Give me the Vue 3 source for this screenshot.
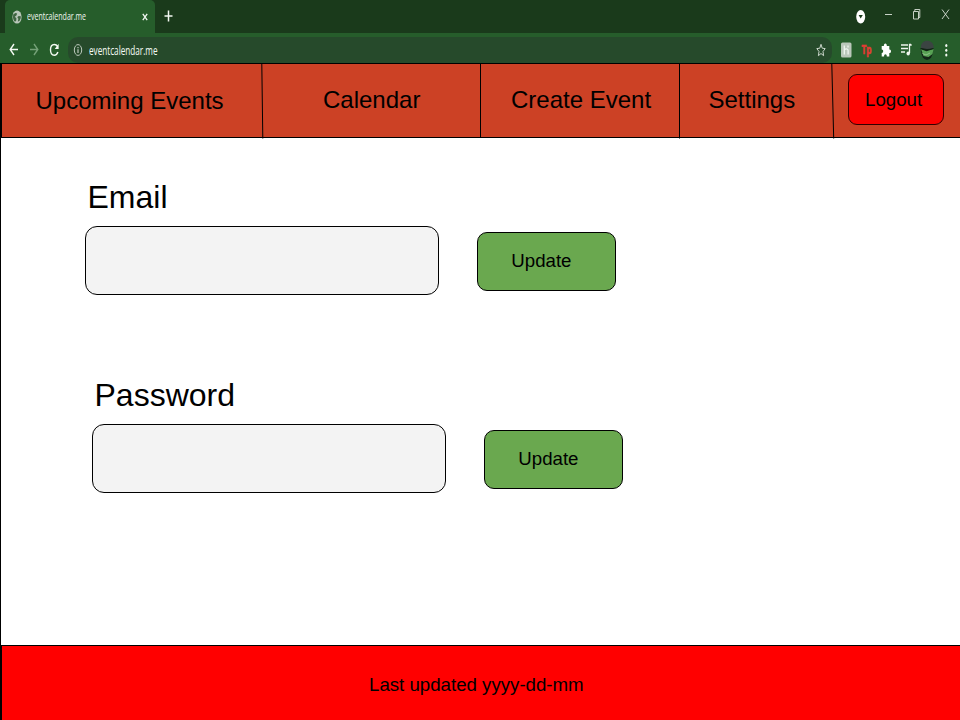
<script setup>
const navItems = [
  { label: 'Upcoming Events', key: 'upcoming' },
  { label: 'Calendar', key: 'calendar' },
  { label: 'Create Event', key: 'create' },
  { label: 'Settings', key: 'settings' },
]
const fields = [
  { label: 'Email', key: 'email', type: 'email' },
  { label: 'Password', key: 'password', type: 'password' },
]
</script>

<template>
  <div class="window">
    <header class="browser">
      <div class="tab-strip">
        <div class="tab">
          <svg class="globe" width="10" height="14" viewBox="0 0 10 14">
            <ellipse cx="5" cy="7" rx="4.6" ry="6.6" fill="#b9c6b9" />
            <path d="M1.200 4.500L3.400 3l1.800.6-.8 1.800L2.800 6.800l1.600 1.400-.2 2.600-1.200 1C1.600 10.400 1 8.500 1 7zM6 6.300l2.600-.4.2 2-1.400 3-1.600.6.600-2.800-1-1z" fill="#3f6541" />
          </svg>
          <svg class="tab-title" width="90" height="20">
            <text x="0" y="13" textLength="59" lengthAdjust="spacingAndGlyphs" font-size="11.500" fill="#f0f6ef">eventcalendar.me</text>
          </svg>
          <svg class="tab-close" width="6" height="8" viewBox="0 0 6 8">
            <path d="M.8.8l4.400 6.400M5.200.8L.8 7.200" stroke="#f2f7f1" stroke-width="1.300" />
          </svg>
        </div>
        <svg class="new-tab" width="9" height="12" viewBox="0 0 9 12">
          <path d="M4.500.5v11M.5 6h8" stroke="#f2f7f1" stroke-width="1.500" />
        </svg>
        <svg class="window-controls" width="100" height="32" viewBox="0 0 100 32">
          <ellipse cx="6.700" cy="16.700" rx="4.500" ry="6.700" fill="#fff" />
          <path d="M4.600 15h4.200l-2.100 3.400z" fill="#193a1b" />
          <path d="M31 14.500h7" stroke="#c8d2c7" stroke-width="1" />
          <path d="M59.500 11.500h5v7.500h-5zM60.800 11.300V9.500h5v8h-1.300" fill="none" stroke="#d7dfd6" stroke-width=".9" />
          <path d="M88 9.500l7 9.500M95 9.500L88 19" stroke="#d7dfd6" stroke-width=".9" />
        </svg>
      </div>
      <div class="toolbar">
        <svg class="history" width="52" height="30" viewBox="0 0 52 30">
          <g fill="none" stroke-width="1.400">
            <path d="M10 16.500H2.500M6 11L2.200 16.500 6 22" stroke="#f4faf3" />
            <path d="M22 16.500h7.500M26 11l3.800 5.500L26 22" stroke="#74a077" />
            <path d="M49.700 13.500C48.800 12.100 47.700 11.500 46.300 11.500c-2.300 0-3.800 2.300-3.800 5.300s1.500 5.400 3.800 5.400c1.700 0 3-1.300 3.600-3.200" stroke="#f4faf3" />
          </g>
          <path d="M50.600 10.800v5.200h-3.800z" fill="#f4faf3" />
        </svg>
        <div class="address">
          <svg class="info" width="10" height="14" viewBox="0 0 10 14">
            <ellipse cx="5" cy="7" rx="3.700" ry="5.400" fill="none" stroke="#bdc9bd" stroke-width="1" />
            <path d="M5 6.200v3.700M5 3.900v1.300" stroke="#bdc9bd" stroke-width="1.200" />
          </svg>
          <svg class="url" width="110" height="22">
            <text x="0" y="15.500" textLength="68.500" lengthAdjust="spacingAndGlyphs" font-size="12.500" fill="#f6fbf5">eventcalendar.me</text>
          </svg>
          <svg class="star" width="10" height="14" viewBox="0 0 10 14">
            <path d="M5 1.300l1.200 3.900 3 .4-2.200 2.900.6 4.200L5 10.500l-2.600 2.200.6-4.200L.8 5.600l3-.4z" fill="none" stroke="#cbd6cb" stroke-width="1" />
          </svg>
        </div>
        <svg class="extensions" width="122" height="30" viewBox="0 0 122 30">
          <rect x="3" y="9.500" width="10.500" height="15" rx="1.500" fill="#bac7ba" />
          <path d="M6.300 12.500v9M6.300 17c1-1.500 3.800-1.500 3.800.5v4M10 12.500v2" fill="none" stroke="#eff5ef" stroke-width="1.300" />
          <text x="23.500" y="21" textLength="10" lengthAdjust="spacingAndGlyphs" font-size="13" font-weight="700" fill="#e33b35" stroke="#e33b35" stroke-width=".6">Tp</text>
          <path d="M43.700 13h2.200c-.5-3.500 3.400-3.500 2.900 0h2.500v3.500c2.300-.5 2.300 4 0 3.500v3.500h-2.500c.2-3-2.900-3-2.700 0h-2.400V20c2 .2 2-3.600 0-3.400z" fill="#fff" />
          <path d="M63 12h7M63 15.500h7M63 19h4" stroke="#eef5ed" stroke-width="1.400" />
          <path d="M73 11.500h-1.500V20M71.500 12h2.200" fill="none" stroke="#eef5ed" stroke-width="1.300" />
          <ellipse cx="70.200" cy="20.500" rx="1.700" ry="2.100" fill="#eef5ed" />
          <ellipse cx="89" cy="17.500" rx="6" ry="9.600" fill="#142718" />
          <path d="M83 13c1-7 11-7 12.500-.5l.3 3-6.800.5-6-1z" fill="#3b4442" />
          <path d="M83 16l5.500 1.500 7-1.500-1 5-4 3-5-1z" fill="#58a254" />
          <path d="M82.500 15.500l6 2 7-2" fill="none" stroke="#102414" stroke-width="1.300" />
          <path d="M84.500 20.500l3.500 1.500 4-2" fill="none" stroke="#8fc28a" stroke-width="1" />
          <g fill="#f4faf3">
            <ellipse cx="108.300" cy="12.500" rx="1.100" ry="1.500" />
            <ellipse cx="108.300" cy="17.200" rx="1.100" ry="1.500" />
            <ellipse cx="108.300" cy="21.900" rx="1.100" ry="1.500" />
          </g>
        </svg>
      </div>
    </header>

    <nav class="nav">
      <a v-for="item in navItems" :key="item.key" class="nav-item" :class="item.key">{{ item.label }}</a>
      <div class="logout-cell">
        <button class="logout">Logout</button>
      </div>
      <svg class="dividers" width="960" height="76" viewBox="0 0 960 76">
        <path d="M261.800 1L262.800 75.500M480.500 1v73.500M679.500 1v74.500M831.800 1L833.700 75.500" stroke="#000" stroke-width="1" fill="none" />
      </svg>
    </nav>

    <main class="content">
      <section v-for="field in fields" :key="field.key" class="field" :class="field.key">
        <label class="label">{{ field.label }}</label>
        <div class="row">
          <input class="input" :type="field.type" />
          <button class="update">Update</button>
        </div>
      </section>
    </main>

    <footer class="footer">Last updated yyyy-dd-mm</footer>
  </div>
</template>

<style>
body { margin: 0; }
</style>

<style scoped>
* { box-sizing: border-box; }
.window {
  width: 960px;
  height: 720px;
  display: flex;
  flex-direction: column;
  overflow: hidden;
  background: #fff;
  color: #000;
  font-family: "Liberation Sans", Arial, sans-serif;
}
svg { display: block; flex: none; }
.browser {
  height: 63px;
  flex: none;
  background: #265d2b;
  font-family: "Open Sans", "Noto Sans", sans-serif;
}
.tab-strip {
  height: 33px;
  padding-left: 5px;
  display: flex;
  background: #1a3a1b;
}
.tab {
  width: 150px;
  height: 33px;
  padding: 0 7px;
  display: flex;
  align-items: center;
  border-radius: 5px 5px 0 0;
  background: #265d2b;
}
.tab-title { margin-left: 5px; }
.tab-close { margin-left: auto; }
.new-tab { margin: 10px 0 0 9px; }
.window-controls { margin-left: auto; margin-right: 6px; }
.toolbar {
  height: 30px;
  display: flex;
  padding-left: 8px;
}
.address {
  width: 764px;
  height: 26px;
  margin: 4px 0 0 8px;
  padding: 0 6px 0 5px;
  display: flex;
  align-items: center;
  border-radius: 10px;
  background: #264a2b;
}
.url { margin-left: 6px; }
.star { margin-left: auto; }
.extensions { margin-left: 6px; }
.nav {
  position: relative;
  height: 75px;
  flex: none;
  display: grid;
  grid-template-columns: 260px 218px 199px 153px 1fr;
  border: 1px solid #000;
  border-width: 1px 0 1px 2px;
  background: #cc4125;
}
.nav-item {
  font-size: 24px;
  line-height: 71px;
  white-space: nowrap;
}
.upcoming { padding: 1px 0 0 33.500px; }
.calendar { padding-left: 61px; }
.create { padding-left: 31px; }
.settings { padding-left: 29.500px; }
.logout-cell { padding: 10px 0 0 16px; }
.logout {
  display: block;
  width: 96px;
  height: 51px;
  padding: 0 0 0 16px;
  border: 1px solid #300;
  border-radius: 9px;
  background: #f00;
  color: #000;
  font: 18.670px/49px "Liberation Sans", Arial, sans-serif;
  text-align: left;
}
.dividers { position: absolute; left: -2px; top: -1px; }
.content {
  flex: 1;
  border-left: 1px solid #000;
  padding: 41px 0 0 84px;
}
.field { height: 198px; }
.password { margin-left: 7px; }
.label {
  display: block;
  height: 47px;
  padding-left: 2.500px;
  font-size: 32px;
  line-height: 36px;
}
.row {
  display: flex;
  align-items: center;
  gap: 38px;
}
.input {
  width: 354px;
  height: 69px;
  padding: 0 12px;
  border: 1px solid #000;
  border-radius: 12px;
  background: #f3f3f3;
  font-size: 24px;
}
.update {
  width: 139px;
  height: 59px;
  margin-top: 2px;
  padding: 0 0 2px 33.300px;
  border: 1px solid #000;
  border-radius: 10px;
  background: #6aa84f;
  color: #000;
  font: 18.670px/55px "Liberation Sans", Arial, sans-serif;
  text-align: left;
}
.footer {
  height: 75px;
  flex: none;
  padding-left: 367px;
  border: 1px solid #000;
  border-width: 1px 0 0 2px;
  background: #f00;
  font-size: 18.670px;
  line-height: 77px;
}
</style>
